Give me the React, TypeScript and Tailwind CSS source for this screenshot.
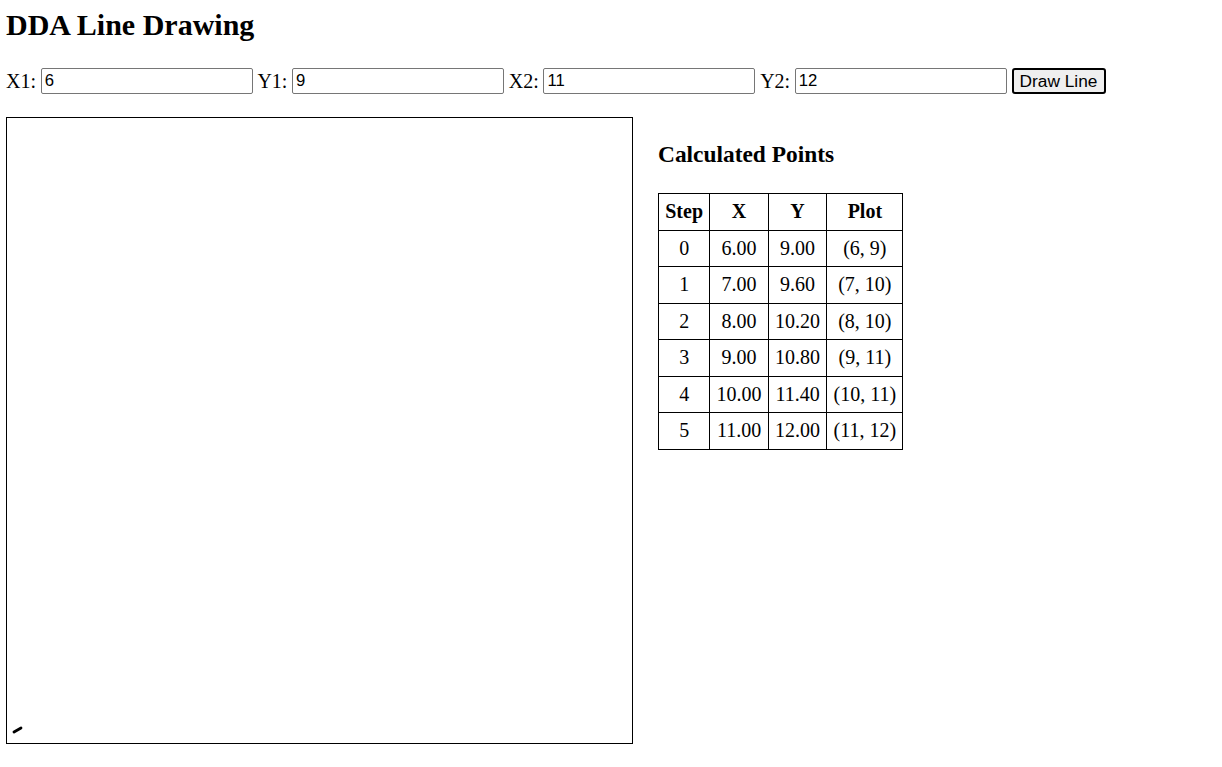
import React from "react";

type Point = { step: number; x: number; y: number };

const points: Point[] = [
  { step: 0, x: 6, y: 9 },
  { step: 1, x: 7, y: 9.6 },
  { step: 2, x: 8, y: 10.2 },
  { step: 3, x: 9, y: 10.8 },
  { step: 4, x: 10, y: 11.4 },
  { step: 5, x: 11, y: 12 },
];

const Field: React.FC<{ label: string; value: string }> = ({ label, value }) => (
  <>
    <span className="leading-[22px]">{label}</span>
    <input
      readOnly
      value={value}
      className="w-[212px] h-[26px] border border-[#767676] rounded-[2px] px-[3px] font-['Liberation_Sans',sans-serif] text-[16.7px] text-black bg-white"
    />
  </>
);

const App: React.FC = () => {
  return (
    <div className="min-h-screen bg-white text-black px-[6px] pt-[8px] font-['Liberation_Serif',serif]">
      <h1 className="text-[30px] font-bold leading-[34px]">DDA Line Drawing</h1>

      {/* Inputs */}
      <div className="mt-[26px] flex items-center gap-[4.7px] text-[20px]">
        <Field label="X1:" value="6" />
        <Field label="Y1:" value="9" />
        <Field label="X2:" value="11" />
        <Field label="Y2:" value="12" />
        <button className="h-[26px] w-[94px] border-2 border-black rounded-[3px] bg-[#efefef] font-['Liberation_Sans',sans-serif] text-[17.3px] leading-[20px] text-black">
          Draw Line
        </button>
      </div>

      <div className="mt-[23px] flex items-start gap-[25px]">
        {/* Canvas */}
        <div className="w-[627px] h-[627px] border border-black shrink-0">
          <svg width="625" height="625" className="block">
            <line x1="7" y1="614" x2="14" y2="610" stroke="#000" strokeWidth="2.8" strokeLinecap="round" />
          </svg>
        </div>

        {/* Results */}
        <div>
          <h3 className="mt-[24px] text-[23.4px] font-bold leading-[27px]">Calculated Points</h3>
          <table className="mt-[25px] border-collapse text-[20px] leading-[23px] text-center">
            <thead>
              <tr>
                {["Step", "X", "Y", "Plot"].map((h) => (
                  <th key={h} className="border border-black px-[6.25px] py-[6.25px] font-bold">
                    {h}
                  </th>
                ))}
              </tr>
            </thead>
            <tbody>
              {points.map((p) => (
                <tr key={p.step}>
                  <td className="border border-black px-[6.25px] py-[6.25px]">{p.step}</td>
                  <td className="border border-black px-[6.25px] py-[6.25px]">{p.x.toFixed(2)}</td>
                  <td className="border border-black px-[6.25px] py-[6.25px]">{p.y.toFixed(2)}</td>
                  <td className="border border-black px-[6.25px] py-[6.25px]">
                    ({Math.round(p.x)}, {Math.round(p.y)})
                  </td>
                </tr>
              ))}
            </tbody>
          </table>
        </div>
      </div>
    </div>
  );
};

export default App;
